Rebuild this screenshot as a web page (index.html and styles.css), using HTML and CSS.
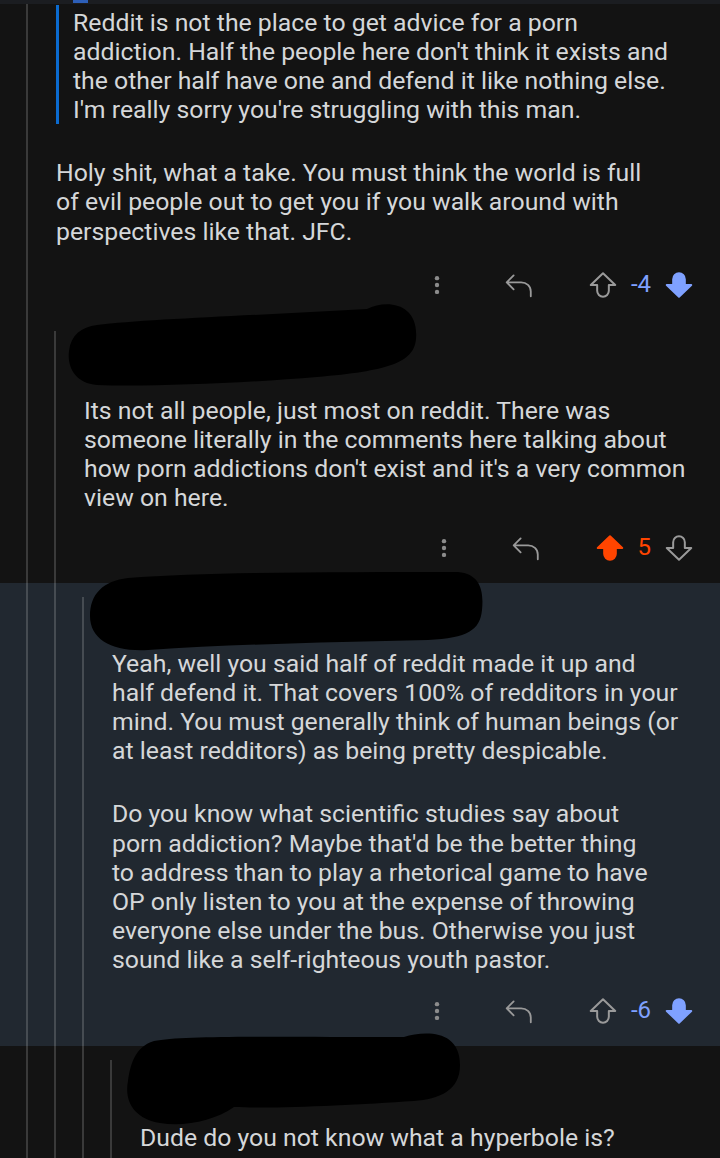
FILE: index.html
```html
<!DOCTYPE html>
<html lang="en">
<head>
    <meta charset="UTF-8">
    <meta name="viewport" content="width=device-width, initial-scale=1.0">
    <title>Comment thread</title>
    <link rel="stylesheet" href="styles.css">
</head>
<body>
    <div class="strip"><span class="strip-mark"></span></div>

    <!-- Comment 1 -->
    <div class="comment c1">
        <div class="guide"></div>
        <div class="content">
            <blockquote class="quote">Reddit is not the place to get advice for a porn<br>addiction. Half the people here don't think it exists and<br>the other half have one and defend it like nothing else.<br>I'm really sorry you're struggling with this man.</blockquote>
            <p>Holy shit, what a take. You must think the world is full<br>of evil people out to get you if you walk around with<br>perspectives like that. JFC.</p>
            <div class="actions">
                <svg class="icon more" viewBox="0 0 24 24"><circle cx="12" cy="4.5" r="2.4"/><circle cx="12" cy="12" r="2.4"/><circle cx="12" cy="19.5" r="2.4"/></svg>
                <svg class="icon reply" viewBox="0 0 28 24"><path d="M9 3 L2.5 9.5 L9 16 M2.5 9.5 H16 C21 9.5 25 13 25 18 V22.5"/></svg>
                <div class="vote">
                    <svg class="icon arrow" viewBox="0 0 24 24"><path d="M12 2 L1.5 12 H7 V17 a5 5 0 0 0 10 0 V12 H22.5 Z"/></svg>
                    <span class="score down">-4</span>
                    <svg class="icon arrow filled-blue" viewBox="0 0 24 24"><path d="M12 22 L1.5 12 H7 V7 a5 5 0 0 1 10 0 V12 H22.5 Z"/></svg>
                </div>
            </div>
        </div>
    </div>

    <!-- Comment 2 -->
    <div class="comment c2">
        <div class="guide"></div>
        <div class="guide own"></div>
        <div class="content">
            <div class="head">
                <svg class="blob blob-1" width="352" height="88" viewBox="0 0 352 88"><path d="M30 24 C80 18 200 14 300 8 C320 -2 352 2 349 38 C347 62 320 70 250 76 C180 82 80 86 30 84 C8 82 0 66 2 50 C4 34 14 26 30 24 Z"/></svg>
            </div>
            <p>Its not all people, just most on reddit. There was<br>someone literally in the comments here talking about<br>how porn addictions don't exist and it's a very common<br>view on here.</p>
            <div class="actions">
                <svg class="icon more" viewBox="0 0 24 24"><circle cx="12" cy="4.5" r="2.4"/><circle cx="12" cy="12" r="2.4"/><circle cx="12" cy="19.5" r="2.4"/></svg>
                <svg class="icon reply" viewBox="0 0 28 24"><path d="M9 3 L2.5 9.5 L9 16 M2.5 9.5 H16 C21 9.5 25 13 25 18 V22.5"/></svg>
                <div class="vote">
                    <svg class="icon arrow filled-orange" viewBox="0 0 24 24"><path d="M12 2 L1.5 12 H7 V17 a5 5 0 0 0 10 0 V12 H22.5 Z"/></svg>
                    <span class="score up">5</span>
                    <svg class="icon arrow" viewBox="0 0 24 24"><path d="M12 22 L1.5 12 H7 V7 a5 5 0 0 1 10 0 V12 H22.5 Z"/></svg>
                </div>
            </div>
        </div>
    </div>

    <!-- Comment 3 (highlighted) -->
    <div class="comment c3 highlight">
        <div class="guide"></div>
        <div class="guide"></div>
        <div class="guide own"></div>
        <div class="content">
            <div class="head">
                <svg class="blob blob-2" width="396" height="84" viewBox="0 0 396 84"><path d="M40 8 C120 2 250 2 370 2 C392 4 396 20 394 40 C392 60 380 68 340 70 C250 72 150 74 60 80 C25 82 2 70 2 46 C2 24 15 11 40 8 Z"/></svg>
            </div>
            <p>Yeah, well you said half of reddit made it up and<br>half defend it. That covers 100% of redditors in your<br>mind. You must generally think of human beings (or<br>at least redditors) as being pretty despicable.</p>
            <p>Do you know what scientific studies say about<br>porn addiction? Maybe that'd be the better thing<br>to address than to play a rhetorical game to have<br>OP only listen to you at the expense of throwing<br>everyone else under the bus. Otherwise you just<br>sound like a self-righteous youth pastor.</p>
            <div class="actions">
                <svg class="icon more" viewBox="0 0 24 24"><circle cx="12" cy="4.5" r="2.4"/><circle cx="12" cy="12" r="2.4"/><circle cx="12" cy="19.5" r="2.4"/></svg>
                <svg class="icon reply" viewBox="0 0 28 24"><path d="M9 3 L2.5 9.5 L9 16 M2.5 9.5 H16 C21 9.5 25 13 25 18 V22.5"/></svg>
                <div class="vote">
                    <svg class="icon arrow" viewBox="0 0 24 24"><path d="M12 2 L1.5 12 H7 V17 a5 5 0 0 0 10 0 V12 H22.5 Z"/></svg>
                    <span class="score down">-6</span>
                    <svg class="icon arrow filled-blue" viewBox="0 0 24 24"><path d="M12 22 L1.5 12 H7 V7 a5 5 0 0 1 10 0 V12 H22.5 Z"/></svg>
                </div>
            </div>
        </div>
    </div>

    <!-- Comment 4 -->
    <div class="comment c4">
        <div class="guide"></div>
        <div class="guide"></div>
        <div class="guide"></div>
        <div class="guide own"></div>
        <div class="content">
            <div class="head">
                <svg class="blob blob-3" width="340" height="98" viewBox="0 0 340 98"><path d="M30 10 C60 4 150 6 280 6 C300 0 336 -2 336 34 C336 60 315 68 290 70 C230 74 150 78 110 76 C90 90 60 96 36 92 C10 88 0 70 4 50 C6 36 10 16 30 10 Z"/></svg>
            </div>
            <p>Dude do you not know what a hyperbole is?</p>
        </div>
    </div>
</body>
</html>
```

FILE: styles.css
```css
body {
    margin: 0;
    background-color: #131313;
    color: #d5d7d9;
    font-family: Roboto, "Noto Sans", sans-serif;
    font-size: 24.8px;
    line-height: 29.1px;
    overflow: hidden;
}
.strip {
    height: 4px;
    background-color: #1b1d21;
}
.strip-mark {
    display: block;
    width: 15px;
    height: 3px;
    margin-left: 73px;
    background-color: #2d5fb8;
}
.comment {
    display: flex;
}
.highlight {
    background-color: #212830;
}
.guide {
    flex: none;
    width: 26px;
    border-right: 2px solid rgba(255, 255, 255, 0.17);
}
.c2 .guide.own {
    margin-top: 11px;
}
.c3 .guide.own,
.c4 .guide.own {
    margin-top: 14px;
}
.content {
    flex: 1;
    min-width: 0;
    padding: 0 0 13px 28px;
}
.content p {
    margin: 34px 0 0 0;
}
.head + p {
    margin-top: 0;
}
.head {
    display: flex;
    align-items: flex-start;
    height: 77px;
}
.c2 .head {
    height: 76px;
}
.c3 .head {
    height: 66px;
}
.c4 .head {
    height: 77.5px;
}
.blob {
    display: block;
    flex: none;
    fill: #000;
}
.blob-1 {
    margin: -19px 0 0 -17px;
}
.blob-2 {
    margin: -13px 0 0 -24px;
}
.blob-3 {
    margin: -15px 0 0 -16px;
}
.quote {
    margin: 1px 0 0 0;
    padding: 3px 0 0 14px;
    border-left: 3px solid #0b6bd0;
}
.actions {
    display: flex;
    justify-content: flex-end;
    align-items: center;
    gap: 55px;
    height: 44px;
    margin-top: 15px;
    padding-right: 27px;
}
.c1 .actions {
    margin-top: 17px;
}
.c2 .actions {
    margin-top: 14px;
}
.vote {
    display: flex;
    align-items: center;
    gap: 14px;
}
.icon {
    width: 28px;
    height: 28px;
    display: block;
}
.more {
    width: 24px;
    height: 22px;
    fill: #8c8c8c;
}
.reply {
    width: 30px;
    height: 28px;
}
.reply,
.arrow {
    fill: none;
    stroke: #9a9a9a;
    stroke-width: 1.7;
    stroke-linecap: round;
    stroke-linejoin: round;
}
.filled-blue {
    fill: #7fa1ff;
    stroke: #7fa1ff;
}
.filled-orange {
    fill: #ff4500;
    stroke: #ff4500;
}
.score {
    font-size: 24px;
}
.score.down {
    color: #7fa1ff;
}
.score.up {
    color: #ff4500;
}
```
